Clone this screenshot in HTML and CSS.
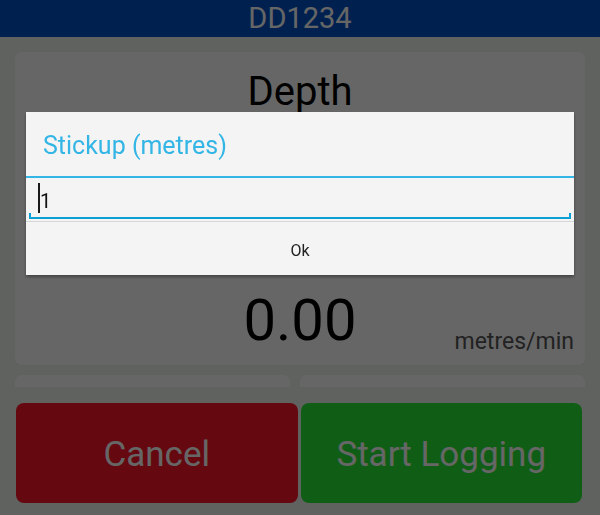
FILE: index.html
```html
<!DOCTYPE html>
<html lang="en">
<head>
<meta charset="utf-8">
<title>DD1234</title>
<link rel="stylesheet" href="styles.css">
</head>
<body>
<div class="app">
  <header class="appbar">DD1234</header>
  <main class="content">
    <section class="card depth-card">
      <h1 class="card-title">Depth</h1>
      <div class="card-body"></div>
      <div class="rate-row">
        <span class="rate-spacer"></span>
        <span class="rate-value">0.00</span>
        <span class="rate-unit">metres/min</span>
      </div>
    </section>
    <div class="mini-cards">
      <section class="card mini-card"></section>
      <section class="card mini-card"></section>
    </div>
  </main>
  <footer class="actions">
    <button class="btn btn-cancel" type="button">Cancel</button>
    <button class="btn btn-start" type="button">Start Logging</button>
  </footer>
</div>

<div class="scrim"></div>

<div class="dialog" role="dialog" aria-label="Stickup (metres)">
  <div class="dialog-title">Stickup (metres)</div>
  <div class="dialog-divider"></div>
  <div class="dialog-body">
    <div class="field">
      <div class="field-text"><span class="caret"></span><span class="field-value">1</span></div>
      <div class="field-underline"></div>
    </div>
  </div>
  <div class="dialog-actions">
    <button class="dialog-btn" type="button">Ok</button>
  </div>
</div>
</body>
</html>
```

FILE: styles.css
```css
* { box-sizing: border-box; }

html, body {
  margin: 0;
  padding: 0;
  width: 600px;
  height: 515px;
  overflow: hidden;
  font-family: Roboto, "Noto Sans", sans-serif;
  background: #eff5f1;
}

.app {
  width: 600px;
  height: 515px;
  display: flex;
  flex-direction: column;
}

.appbar {
  height: 37px;
  flex: none;
  background: #0053c8;
  color: #ffffff;
  font-size: 29px;
  line-height: 37px;
  text-align: center;
}

.content {
  flex: 1;
  min-height: 0;
  overflow: hidden;
  padding: 15px 15px 0 15px;
  display: flex;
  flex-direction: column;
  gap: 10px;
}

.card {
  background: #ffffff;
  border-radius: 7px;
}

.depth-card {
  height: 313px;
  flex: none;
  display: flex;
  flex-direction: column;
  padding: 16px 11px 10px 11px;
}

.card-title {
  margin: 0;
  font-size: 40px;
  font-weight: 400;
  line-height: normal;
  text-align: center;
  color: #000;
}

.card-body { flex: 1; }

.rate-row {
  display: grid;
  grid-template-columns: 1fr auto 1fr;
  align-items: end;
}

.rate-value {
  font-size: 58px;
  line-height: 58px;
  margin-bottom: 6px;
  color: #000;
}

.rate-unit {
  justify-self: end;
  font-size: 23px;
  line-height: normal;
  color: #555555;
}

.mini-cards {
  display: grid;
  grid-template-columns: 275fr 285fr;
  gap: 10px;
  flex: none;
}

.mini-card { height: 100px; }

.actions {
  flex: none;
  height: 128px;
  padding: 16px 18px 12px 16px;
  display: flex;
  gap: 3px;
}

.btn {
  flex: 1;
  height: 100px;
  border: none;
  border-radius: 8px;
  font-family: Roboto, "Noto Sans", sans-serif;
  font-size: 35px;
  color: #ffffff;
  padding: 2px 0 0 0;
}

.btn-cancel { background: #fd1428; }
.btn-start { background: #28eb37; }

.scrim {
  position: fixed;
  inset: 0;
  background: rgba(0, 0, 0, 0.6);
}

.dialog {
  position: fixed;
  left: 26px;
  top: 112px;
  width: 548px;
  background: #f4f4f4;
  box-shadow: 0 2px 3px rgba(0, 0, 0, 0.35);
}

.dialog-title {
  height: 64px;
  padding: 2px 0 0 17px;
  display: flex;
  align-items: center;
  font-size: 25px;
  color: #33b5e5;
}

.dialog-divider {
  height: 2px;
  background: #33b5e5;
}

.dialog-body {
  height: 44px;
  padding: 0 3px;
  border-bottom: 1px solid #d6d6d6;
}

.field {
  height: 41px;
  display: flex;
  flex-direction: column;
}

.field-text {
  flex: 1;
  display: flex;
  align-items: flex-end;
  padding-left: 9px;
}

.caret {
  width: 2px;
  height: 30px;
  background: #1a1a1a;
}

.field-value {
  font-size: 20px;
  line-height: 20px;
  padding-bottom: 2px;
  color: #111;
}

.field-underline {
  height: 6px;
  border-left: 2px solid #0aa0d6;
  border-right: 2px solid #0aa0d6;
  border-bottom: 2px solid #0aa0d6;
}

.dialog-actions {
  height: 53px;
  display: flex;
}

.dialog-btn {
  flex: 1;
  border: none;
  background: transparent;
  font-family: Roboto, "Noto Sans", sans-serif;
  font-size: 16px;
  padding: 4px 0 0 0;
  color: #222;
}
```
